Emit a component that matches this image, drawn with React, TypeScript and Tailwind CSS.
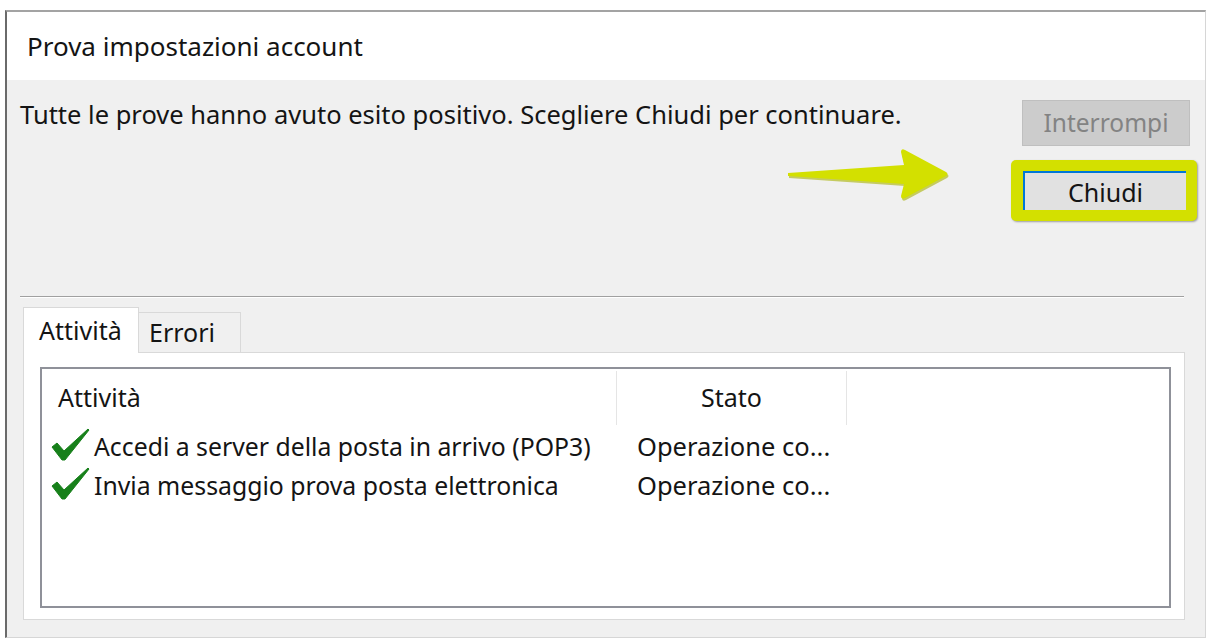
import React from "react";

const Check: React.FC = () => (
  <svg width="40" height="34" viewBox="0 0 40 34" className="shrink-0 -mt-[4px]">
    <path d="M1 19 L6 15 L13 23 L37 1 L38 2 L14 32 L11 32 Z" fill="#17801a" stroke="#17801a" strokeWidth="1" strokeLinejoin="round" />
  </svg>
);

const Arrow: React.FC = () => (
  <svg width="170" height="56" viewBox="0 0 170 56" className="absolute left-[776px] top-[66px]">
    <path
      d="M5 27 L121 19 L118 6 Q118 2 122 4 L163 26 Q166 28 163 30 L122 52 Q118 54 118 50 L121 38 L5 30 Z"
      fill="#a9b300"
      transform="translate(1 2)"
      opacity="0.6"
    />
    <path
      d="M5 27 L121 19 L118 6 Q118 2 122 4 L163 26 Q166 28 163 30 L122 52 Q118 54 118 50 L121 38 L5 30 Z"
      fill="#d3e000"
    />
  </svg>
);

const rows = [
  "Accedi a server della posta in arrivo (POP3)",
  "Invia messaggio prova posta elettronica",
];

const App: React.FC = () => {
  return (
    <div className="w-[1212px] h-[642px] bg-white pt-[10px] pl-[5px] font-['Noto_Sans','Open_Sans',sans-serif] text-[#141414]">
      <div className="w-[1201px] h-[628px] flex flex-col border-l-2 border-l-[#6a6a6a] border-t-2 border-t-[#a3a3a3] border-r border-r-[#d6d6d6] border-b border-b-[#d6d6d6]">
        <div className="h-[68px] bg-white pl-[20px] flex items-center text-[26px] leading-none">
          Prova impostazioni account
        </div>
        <div className="flex-1 bg-[#f0f0f0] flex flex-col relative">
          <Arrow />
          <div className="h-[216px] flex justify-between">
            <p className="pl-[13px] pt-[18px] text-[25.5px] leading-[32px] whitespace-nowrap">
              Tutte le prove hanno avuto esito positivo. Scegliere Chiudi per continuare.
            </p>
            <div className="w-[186px] mr-[8px] flex flex-col pt-[20px]">
              <div className="ml-[11px] w-[168px] h-[46px] bg-[#cccccc] border border-[#bfbfbf] flex items-center justify-center text-[24.5px] text-[#838383]">
                Interrompi
              </div>
              <div className="mt-[14px] h-[61px] rounded-[5px] bg-[#d3e000] shadow-[1px_1px_2px_rgba(0,0,0,0.35)] pt-[11px] pl-[12px]">
                <div className="w-[163px] h-[39px] bg-[#e1e1e1] border-t-2 border-l-2 border-[#0078d7] flex items-center justify-center text-[25px] pt-[3px]">
                  Chiudi
                </div>
              </div>
            </div>
          </div>
          <div className="mx-[13px] w-[1164px] border-t border-t-[#a0a0a0] border-b border-b-white" />
          <div className="pl-[16px] pt-[9px] flex flex-col">
            <div className="flex items-end h-[46px]">
              <div className="w-[116px] h-[46px] bg-white border border-[#d9d9d9] border-b-0 flex items-center pl-[15px] text-[25px] relative z-10">
                Attività
              </div>
              <div className="w-[102px] h-[41px] bg-[#f0f0f0] border border-[#d9d9d9] border-l-0 border-b-0 flex items-center pl-[10px] text-[25px]">
                Errori
              </div>
            </div>
            <div className="w-[1162px] h-[268px] bg-white border border-[#d9d9d9] -mt-px pl-[16px] pr-[14px] pt-[14px]">
              <div className="w-[1131px] h-[241px] border-2 border-[#8f9199] flex flex-col">
                <div className="flex h-[58px] pt-[2px] text-[25px]">
                  <div className="w-[575px] h-[54px] flex items-center pl-[16px] border-r border-r-[#e5e5e5]">Attività</div>
                  <div className="w-[230px] h-[54px] flex items-center justify-center border-r border-r-[#e5e5e5]">Stato</div>
                </div>
                {rows.map((r) => (
                  <div key={r} className="flex items-center h-[39px]">
                    <div className="w-[575px] flex items-center pl-[9px] gap-[3px] text-[24.8px]">
                      <Check />
                      <span>{r}</span>
                    </div>
                    <div className="pl-[20px] text-[25.5px]">Operazione co...</div>
                  </div>
                ))}
              </div>
            </div>
          </div>
        </div>
      </div>
    </div>
  );
};

export default App;
